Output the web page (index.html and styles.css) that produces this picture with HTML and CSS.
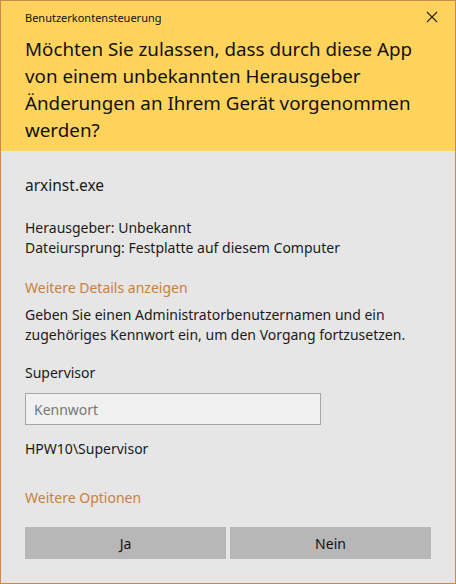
FILE: index.html
```html
<!DOCTYPE html>
<html lang="de">
<head>
<meta charset="utf-8">
<link rel="stylesheet" href="styles.css">
</head>
<body>
<div class="window">
  <header class="head">
    <div class="titlebar">
      <span class="title">Benutzerkontensteuerung</span>
      <svg class="close" width="12" height="12" viewBox="0 0 12 12"><path d="M1 1L11 11M11 1L1 11" stroke="#222" stroke-width="1.1" fill="none"/></svg>
    </div>
    <h1 class="question">Möchten Sie zulassen, dass durch diese App von einem unbekannten Herausgeber Änderungen an Ihrem Gerät vorgenommen werden?</h1>
  </header>
  <main class="body">
    <div class="app">arxinst.exe</div>
    <div class="info">
      <div>Herausgeber: Unbekannt</div>
      <div>Dateiursprung: Festplatte auf diesem Computer</div>
    </div>
    <div class="link details">Weitere Details anzeigen</div>
    <p class="prompt">Geben Sie einen Administratorbenutzernamen und ein zugehöriges Kennwort ein, um den Vorgang fortzusetzen.</p>
    <div class="user">Supervisor</div>
    <input class="pw" type="password" placeholder="Kennwort">
    <div class="domain">HPW10\Supervisor</div>
    <div class="link options">Weitere Optionen</div>
    <div class="buttons">
      <button class="btn">Ja</button>
      <button class="btn">Nein</button>
    </div>
  </main>
</div>
</body>
</html>
```
FILE: styles.css
```css
html, body {
  margin: 0;
  padding: 0;
  background: #e6e6e6;
}
.window {
  width: 456px;
  height: 584px;
  box-sizing: border-box;
  border: 1px solid #c98a4c;
  background: #e6e6e6;
  font-family: "Noto Sans", "Open Sans", sans-serif;
  color: #1a1a1a;
  display: flex;
  flex-direction: column;
}
.head {
  background: #ffd35c;
  height: 150px;
  box-sizing: border-box;
  padding: 0 0 0 24px;
}
.titlebar {
  display: flex;
  align-items: center;
  justify-content: space-between;
  height: 32px;
  padding-right: 17px;
}
.title {
  font-size: 11px;
  color: #111;
}
.close {
  display: block;
}
.question {
  margin: 3px 0 0;
  font-weight: normal;
  font-size: 18.8px;
  line-height: 27px;
  color: #111;
  padding-right: 20px;
}
.body {
  padding: 23px 24px 0 24px;
  display: flex;
  flex-direction: column;
}
.app {
  font-size: 15.5px;
  line-height: 22px;
}
.info {
  margin-top: 22px;
  font-size: 14px;
  line-height: 20px;
}
.link {
  color: #c8803f;
  font-size: 14px;
  line-height: 20px;
}
.details {
  margin-top: 20px;
}
.prompt {
  margin: 7px 0 0;
  font-size: 14px;
  line-height: 20px;
}
.user {
  margin-top: 18px;
  font-size: 14px;
  line-height: 20px;
}
.pw {
  margin-top: 10px;
  width: 296px;
  height: 32px;
  box-sizing: border-box;
  border: 1px solid #a6a6a6;
  background: #f0f0f0;
  padding: 0 8px;
  font-family: inherit;
  font-size: 14px;
  outline: none;
}
.pw::placeholder {
  color: #777;
}
.domain {
  margin-top: 14px;
  font-size: 14px;
  line-height: 20px;
}
.options {
  margin-top: 29px;
}
.buttons {
  margin-top: 19px;
  display: flex;
  gap: 4px;
}
.btn {
  flex: 1;
  height: 32px;
  border: none;
  background: #b7b7b7;
  font-family: inherit;
  font-size: 14px;
  color: #111;
  padding: 0;
}
```
